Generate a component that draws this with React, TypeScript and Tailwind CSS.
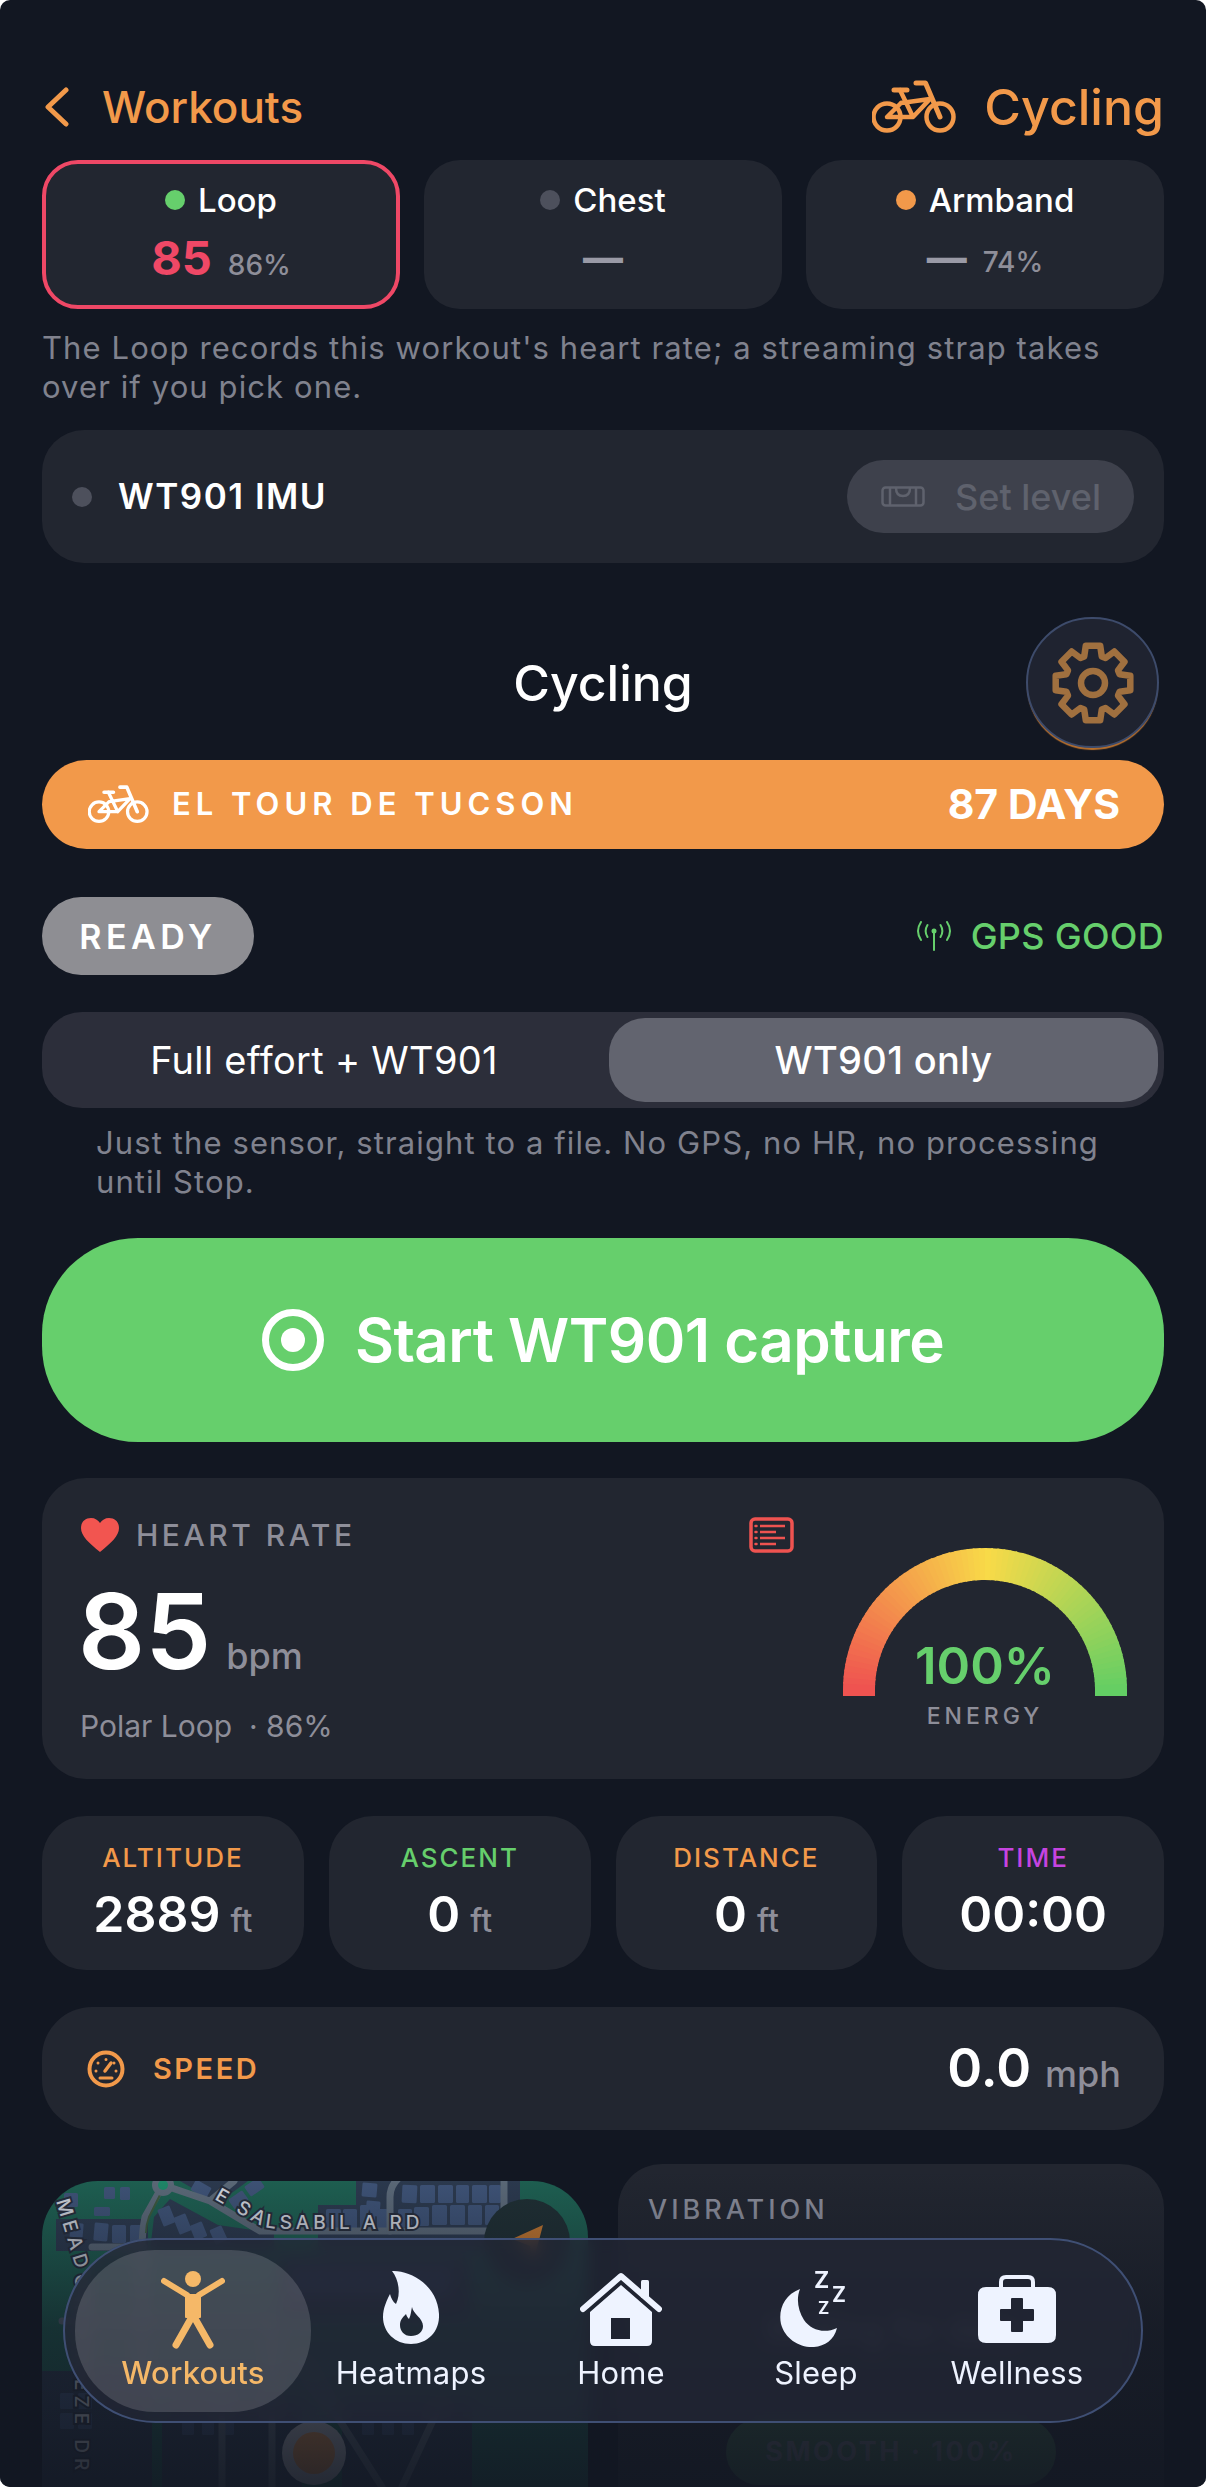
import React from 'react';

const cardClasses = "bg-[#222630] rounded-[44px]";
const statLabel = "text-[26px] leading-[30px] font-medium tracking-[2px]";
const noteClasses = "text-[31px] leading-[39px] tracking-[1.1px] text-[#80828e]";
const tabLabel = "text-[31px] leading-[36px] tracking-[0.2px]";
const font = { fontFamily: 'Inter, "Liberation Sans", sans-serif' };

function BikeIcon({ className }: { className?: string }) {
  return (
    <svg viewBox="0 0 84 54" className={className} fill="none" stroke="currentColor" strokeLinecap="round" strokeLinejoin="round">
      <circle cx="15" cy="37" r="13.500" strokeWidth="4.500" />
      <circle cx="68" cy="37" r="13.500" strokeWidth="4.500" />
      <path d="M22 10h13M44 3h9.500l14.500 34" strokeWidth="5" />
      <path d="M28 10l13 27M29 23l29-4-17 18H15l14-14" strokeWidth="4.500" />
    </svg>
  );
}

function gearPath(cx: number, cy: number) {
  const pts: string[] = [];
  for (let i = 0; i < 8; i++) {
    const a = (i * Math.PI) / 4 - Math.PI / 2;
    const at = (r: number, d: number) => `${(cx + r * Math.cos(a + d)).toFixed(1)} ${(cy + r * Math.sin(a + d)).toFixed(1)}`;
    pts.push(at(28, -0.32), at(38, -0.19), at(38, 0.19), at(28, 0.32));
  }
  return 'M' + pts.join('L') + 'Z';
}

function Gauge() {
  const segs = 72;
  const lerp = (a: number[], b: number[], t: number) => a.map((v, i) => Math.round(v + (b[i] - v) * t));
  const red = [239, 83, 80], yellow = [248, 218, 72], green = [98, 206, 100];
  return (
    <svg width="284" height="148" viewBox="0 0 284 148">
      <rect x="0" y="141" width="32" height="7" fill="rgb(239,83,80)" />
      <rect x="252" y="141" width="32" height="7" fill="rgb(98,206,100)" />
      {Array.from({ length: segs }).map((_, i) => {
        const t = i / segs;
        const a0 = Math.PI - t * Math.PI;
        const a1 = Math.PI - ((i + 1.3) / segs) * Math.PI;
        const c = t < 0.5 ? lerp(red, yellow, t * 2) : lerp(yellow, green, (t - 0.5) * 2);
        const r = 126;
        return (
          <path
            key={i}
            d={`M${142 + r * Math.cos(a0)} ${142 - r * Math.sin(a0)}A${r} ${r} 0 0 1 ${142 + r * Math.cos(Math.max(a1, 0))} ${142 - r * Math.sin(Math.max(a1, 0))}`}
            stroke={`rgb(${c.join(',')})`}
            strokeWidth="32"
            fill="none"
          />
        );
      })}
    </svg>
  );
}

function MapArt() {
  const blocks: [number, number, number, number, number][] = [
    // left block
    [28, 42, 13, 18, 5], [52, 42, 14, 18, 5], [70, 44, 14, 18, 0], [88, 44, 12, 17, 0], [22, 12, 14, 14, 0],
    [62, 6, 11, 12, 0], [78, 6, 10, 13, 0], [52, 26, 16, 9, 0],
    // centre
    [118, 26, 13, 18, -22], [134, 34, 13, 18, -22], [150, 42, 13, 16, -22], [170, 46, 13, 16, -25],
    [150, 2, 18, 12, 30], [188, 13, 17, 12, -35], [204, 0, 17, 12, -35],
    // right
    [320, 2, 15, 14, 5], [324, 20, 14, 15, 5], [284, 28, 15, 20, 0], [301, 28, 14, 20, 0], [318, 24, 15, 24, 0], [335, 28, 11, 20, 0],
    [360, 4, 15, 18, 3], [378, 4, 15, 18, 0], [396, 4, 15, 18, 0], [414, 4, 13, 18, 0], [430, 4, 15, 18, 0], [447, 4, 12, 18, 0],
    [356, 28, 14, 18, 0], [372, 26, 15, 19, 0], [390, 24, 15, 20, 0], [408, 24, 15, 20, 0], [426, 24, 14, 20, 0], [443, 24, 14, 20, 0],
    // under the nav
    [272, 88, 14, 28, 0], [292, 88, 14, 28, 0], [312, 88, 14, 28, 0], [332, 88, 14, 28, 0], [352, 88, 14, 28, 0], [372, 88, 14, 28, 0], [392, 88, 14, 28, 0], [252, 88, 14, 28, 0],
    // lower left
    [18, 212, 14, 16, 0], [36, 212, 14, 16, 0], [18, 232, 14, 16, 0], [36, 232, 14, 16, 0], [140, 240, 12, 14, 0], [160, 240, 12, 14, 0], [180, 240, 12, 14, 0],
    [320, 240, 12, 14, 0], [340, 240, 12, 14, 0], [360, 240, 12, 14, 0],
  ];
  return (
    <svg viewBox="0 0 546 306" width="546" height="306" className="block">
      <rect width="546" height="306" fill="#1e6152" />
      <g fill="#2c3a4f">
        <path d="M128 18L176 44 232 52V70H108L112 36ZM138 0H206L176 22Z" />
        <rect x="14" y="38" width="92" height="32" />
        <rect x="276" y="24" width="72" height="46" />
        <rect x="314" y="0" width="164" height="70" />
        <rect x="238" y="76" width="190" height="60" />
        <rect x="0" y="190" width="110" height="116" />
        <rect x="120" y="220" width="140" height="86" />
        <rect x="300" y="220" width="130" height="86" />
      </g>
      <g fill="#3f5478">
        {blocks.map(([x, y, w, h, r], i) => (
          <rect key={i} x={x} y={y} width={w} height={h} rx="1.500" transform={`rotate(${r} ${x + w / 2} ${y + h / 2})`} />
        ))}
      </g>
      <g fill="none" stroke="#5d6b7a" strokeWidth="7" strokeLinecap="round" strokeLinejoin="round">
        <path d="M121 4L103 36Q100 50 100 70V190M121 4L168 20 192 0M168 20L218 50H480M50 66H102" />
        <path d="M348 50V16Q348 4 358 -4M462 50V-4M20 140H230V306M180 200V306M260 180L340 306M400 220L360 306M100 200H180" />
      </g>
      <path d="M121 8L107 36Q104 44 104 52" stroke="#3c5a3e" strokeWidth="2" fill="none" />
      <circle cx="121" cy="4" r="11" fill="#5d6b7a" />
      <circle cx="121" cy="4" r="5" fill="#1f8a6a" />
      <circle cx="485" cy="61" r="43" fill="#1f2f33" />
      <path d="M501 44L470 58 488 65 491 82Z" fill="#c8792f" />
      <circle cx="272" cy="272" r="32" fill="#c4c6ce" />
      <circle cx="272" cy="272" r="21" fill="#f2994a" />
      <g fontFamily="Inter, sans-serif" fontSize="19" fontWeight="500" fill="#d5d9e0" stroke="#262d3b" strokeWidth="4" paintOrder="stroke" letterSpacing="4">
        <defs>
          <path id="salsabil" d="M172 18L214 42Q224 48 240 48H430" />
          <path id="meadow" d="M14 20L33 84V300" />
        </defs>
        <text><textPath href="#salsabil">E SALSABIL A RD</textPath></text>
        <text letterSpacing="5"><textPath href="#meadow">MEADOW BREEZE DR</textPath></text>
      </g>
    </svg>
  );
}

export default function App() {
  const stats = [
    { label: 'ALTITUDE', color: 'text-[#f2994a]', value: '2889', unit: 'ft' },
    { label: 'ASCENT', color: 'text-[#66cf6c]', value: '0', unit: 'ft' },
    { label: 'DISTANCE', color: 'text-[#f2994a]', value: '0', unit: 'ft' },
    { label: 'TIME', color: 'text-[#c644e0]', value: '00:00', unit: '' },
  ];

  return (
    <div className="w-[1206px] h-[2487px] bg-white overflow-hidden" style={font}>
      <div className="relative w-full h-full bg-[#121722] rounded-[10px] overflow-hidden px-[42px] pt-[76px] flex flex-col text-white">
        {/* header */}
        <div className="h-[62px] flex items-center justify-between shrink-0">
          <div className="flex items-center text-[#f2994a]">
            <svg width="26" height="40" viewBox="0 0 26 40" fill="none" stroke="currentColor" strokeWidth="5" strokeLinecap="round" strokeLinejoin="round" className="ml-[2px]">
              <path d="M22 3L4 20l18 17" />
            </svg>
            <span className="ml-[32px] text-[44px] leading-[50px] font-medium">Workouts</span>
          </div>
          <div className="flex items-center text-[#f2994a]">
            <BikeIcon className="w-[84px] h-[54px]" />
            <span className="ml-[28px] text-[50px] leading-[56px] font-medium">Cycling</span>
          </div>
        </div>

        {/* sensors */}
        <div className="mt-[22px] grid grid-cols-3 gap-[24px] h-[149px] shrink-0">
          <div className="bg-[#222630] rounded-[36px] border-[4px] border-[#ef4866] flex flex-col items-center pt-[18px]">
            <div className="flex items-center gap-[13px] h-[36px]">
              <span className="w-[20px] h-[20px] rounded-full bg-[#66cf6c]" />
              <span className="text-[33px] leading-[36px] font-medium">Loop</span>
            </div>
            <div className="flex items-baseline gap-[16px] mt-[12px]">
              <span className="text-[47px] leading-[56px] font-bold text-[#ef4866]">85</span>
              <span className="text-[28px] font-medium text-[#8e8e99]">86%</span>
            </div>
          </div>
          <div className="bg-[#222630] rounded-[36px] flex flex-col items-center pt-[22px]">
            <div className="flex items-center gap-[13px] h-[36px]">
              <span className="w-[20px] h-[20px] rounded-full bg-[#4d505c]" />
              <span className="text-[33px] leading-[36px] font-medium">Chest</span>
            </div>
            <span className="mt-[12px] text-[40px] leading-[56px] font-extrabold text-[#9a9aa6]">—</span>
          </div>
          <div className="bg-[#222630] rounded-[36px] flex flex-col items-center pt-[22px]">
            <div className="flex items-center gap-[13px] h-[36px]">
              <span className="w-[20px] h-[20px] rounded-full bg-[#f2994a]" />
              <span className="text-[33px] leading-[36px] font-medium">Armband</span>
            </div>
            <div className="mt-[12px] flex items-baseline gap-[16px]">
              <span className="text-[40px] leading-[56px] font-extrabold text-[#9a9aa6]">—</span>
              <span className="text-[28px] font-medium text-[#8e8e99]">74%</span>
            </div>
          </div>
        </div>

        <p className={`mt-[19px] ${noteClasses}`}>
          The Loop records this workout's heart rate; a streaming strap takes over if you pick one.
        </p>

        {/* imu */}
        <div className="mt-[24px] h-[133px] shrink-0 rounded-[42px] bg-[#222630] flex items-center pl-[30px] pr-[30px]">
          <span className="w-[20px] h-[20px] rounded-full bg-[#4d505c]" />
          <span className="ml-[26px] text-[35px] font-semibold tracking-[1.5px]">WT901 IMU</span>
          <div className="ml-auto w-[287px] h-[73px] rounded-full bg-[#3e414c] flex items-center pl-[34px] text-[#5f626d]">
            <svg width="44" height="21" viewBox="0 0 44 21" fill="none" stroke="currentColor" strokeWidth="2.500">
              <rect x="1.500" y="1.500" width="41" height="18" rx="3" />
              <path d="M9 2v17M35 2v17" />
              <path d="M15 2c0 6 3 8 7 8s7-2 7-8" />
            </svg>
            <span className="ml-[30px] text-[36px] font-medium">Set level</span>
          </div>
        </div>

        {/* title */}
        <div className="relative mt-[54px] h-[131px] shrink-0 flex items-center justify-center">
          <span className="text-[50px] leading-[56px] font-medium">Cycling</span>
          <div className="absolute right-[5px] top-0 w-[133px] h-[131px] rounded-full bg-[#1f2330] border-[2px] border-[#3d4b6b] shadow-[0_3px_1px_-1px_#b9702c] flex items-center justify-center">
            <svg width="90" height="90" viewBox="0 0 90 90" fill="none" stroke="#a0703f" strokeWidth="6.500" strokeLinejoin="round">
              <path d={gearPath(45, 45)} />
              <circle cx="45" cy="45" r="12" />
            </svg>
          </div>
        </div>

        {/* event bar */}
        <div className="mt-[12px] h-[89px] shrink-0 rounded-full bg-[#f2994a] flex items-center pl-[46px] pr-[44px]">
          <BikeIcon className="w-[61px] h-[39px]" />
          <span className="ml-[23px] text-[31px] font-semibold tracking-[5px]">EL TOUR DE TUCSON</span>
          <span className="ml-auto text-[41px] font-bold">87 DAYS</span>
        </div>

        {/* status */}
        <div className="mt-[48px] h-[78px] shrink-0 flex items-center justify-between">
          <div className="h-full w-[212px] rounded-full bg-[#8e8e93] flex items-center justify-center text-[34px] font-semibold tracking-[4.5px]">READY</div>
          <div className="flex items-center text-[#66cf6c] text-[36px] font-medium tracking-[0.3px]">
            <svg width="36" height="30" viewBox="0 0 36 30" fill="none" stroke="currentColor" strokeWidth="2" strokeLinecap="round">
              <path d="M18 10v19" />
              <circle cx="18" cy="10" r="2.500" fill="currentColor" stroke="none" />
              <path d="M11.500 4c-2.500 4-2.500 8 0 12M24.500 4c2.500 4 2.500 8 0 12M5 1c-4 6-4 12 0 18M31 1c4 6 4 12 0 18" />
            </svg>
            <span className="ml-[19px]">GPS GOOD</span>
          </div>
        </div>

        {/* mode switch */}
        <div className="mt-[37px] h-[96px] shrink-0 rounded-[40px] bg-[#2c2e3a] p-[6px] flex">
          <div className="w-[561px] pr-[9px] flex items-center justify-center text-[38px] tracking-[0.3px]">Full effort + WT901</div>
          <div className="flex-1 rounded-[36px] bg-[#62646f] flex items-center justify-center text-[38px] font-medium tracking-[0.3px]">WT901 only</div>
        </div>

        <p className={`mt-[15px] pl-[54px] pr-[30px] ${noteClasses}`}>
          Just the sensor, straight to a file. No GPS, no HR, no processing until Stop.
        </p>

        {/* start */}
        <div className="mt-[37px] h-[204px] shrink-0 rounded-[96px] bg-[#66cf6c] flex items-center justify-center">
          <svg width="62" height="62" viewBox="0 0 62 62">
            <circle cx="31" cy="31" r="27.500" fill="none" stroke="white" strokeWidth="7" />
            <circle cx="31" cy="31" r="12" fill="white" />
          </svg>
          <span className="ml-[31px] text-[60px] font-semibold tracking-[-0.5px]">Start WT901 capture</span>
        </div>

        {/* heart rate */}
        <div className={`${cardClasses} mt-[36px] h-[301px] shrink-0 flex pl-[38px] pr-[37px]`}>
          <div className="flex-1 pr-[49px] flex flex-col">
            <div className="mt-[39px] h-[36px] flex items-center justify-between">
              <div className="flex items-center">
                <svg width="38" height="34" viewBox="0 0 38 34" fill="#f25550" className="ml-[1px]">
                  <path d="M19 34C8 25 0 18 0 10 0 4 4 0 10 0c4 0 7 2 9 5 2-3 5-5 9-5 6 0 10 4 10 10 0 8-8 15-19 24Z" />
                </svg>
                <span className="ml-[17px] text-[30px] font-medium tracking-[3.5px] text-[#8e8e99]">HEART RATE</span>
              </div>
              <svg width="45" height="36" viewBox="0 0 45 36" fill="none" stroke="#ef5350">
                <rect x="2" y="2" width="41" height="32" rx="4" strokeWidth="3.500" />
                <path d="M11 9h25M11 15h16M11 21h25M11 27h16" strokeWidth="2.500" />
                <path d="M6.500 9h1M6.500 15h1M6.500 21h1M6.500 27h1" strokeWidth="2.500" strokeLinecap="round" />
              </svg>
            </div>
            <div className="mt-[22px] flex items-baseline">
              <span className="text-[105px] leading-[112px] font-semibold -ml-[2px]">85</span>
              <span className="ml-[15px] text-[36px] font-medium text-[#8e8e99]">bpm</span>
            </div>
            <div className="mt-[21px] text-[30px] leading-[36px] text-[#8e8e99]">Polar Loop&nbsp; · 86%</div>
          </div>
          <div className="w-[284px] pt-[70px] flex flex-col items-center">
            <Gauge />
            <span className="-mt-[58px] text-[51px] leading-[56px] font-semibold text-[#66cf6c]">100%</span>
            <span className="mt-[8px] text-[23px] leading-[28px] font-medium tracking-[4px] text-[#8e8e99]">ENERGY</span>
          </div>
        </div>

        {/* stats */}
        <div className="mt-[37px] h-[154px] shrink-0 grid grid-cols-4 gap-[25px]">
          {stats.map(s => (
            <div key={s.label} className={`${cardClasses} flex flex-col items-center pt-[27px]`}>
              <span className={`${statLabel} ${s.color}`}>{s.label}</span>
              <div className="mt-[10px] flex items-baseline">
                <span className="text-[50px] leading-[62px] font-semibold">{s.value}</span>
                {s.unit && <span className="ml-[10px] text-[32px] font-medium text-[#8e8e99]">{s.unit}</span>}
              </div>
            </div>
          ))}
        </div>

        {/* speed */}
        <div className={`${cardClasses} mt-[37px] h-[123px] shrink-0 rounded-[50px] flex items-center pl-[45px] pr-[43px]`}>
          <svg width="38" height="38" viewBox="0 0 38 38" fill="none" stroke="#f2994a" strokeLinecap="round">
            <circle cx="19" cy="19" r="16.500" strokeWidth="4" />
            <path d="M19 9.500v.1M11 13v.1M27 13v.1M9 21v.1M29 21v.1M13 28h12" strokeWidth="3" />
            <path d="M18 21l6-8" strokeWidth="3.500" />
          </svg>
          <span className="ml-[28px] text-[29px] font-semibold tracking-[2.5px] text-[#f2994a]">SPEED</span>
          <div className="ml-auto flex items-baseline">
            <span className="text-[53px] font-semibold">0.0</span>
            <span className="ml-[14px] text-[36px] font-medium text-[#8e8e99]">mph</span>
          </div>
        </div>

        {/* map + vibration */}
        <div className="mt-[34px] grid grid-cols-2 gap-[30px] shrink-0">
          <div className="mt-[17px] h-[306px] rounded-t-[56px] overflow-hidden">
            <MapArt />
          </div>
          <div className={`${cardClasses} h-[323px] rounded-b-none flex flex-col items-center pt-[30px]`}>
            <span className="self-start ml-[30px] text-[27px] leading-[32px] font-medium tracking-[4px] text-[#8e919e]">VIBRATION</span>
            <span className="mt-[78px] text-[34px] text-[#8e919e]">Waiting for data</span>
            <div className="mt-[64px] w-[330px] h-[66px] rounded-full bg-[#66cf6c]/35 flex items-center justify-center text-[27px] font-bold tracking-[2.5px] text-[#6a6d78]">SMOOTH · 100%</div>
          </div>
        </div>

        {/* fade under the tab bar */}
        <div className="absolute inset-x-0 bottom-0 h-[317px] pointer-events-none bg-gradient-to-b from-[#121722]/0 via-[#121722]/65 to-[#121722]/90" />

        {/* tab bar */}
        <div className="absolute left-[63px] right-[63px] bottom-[64px] h-[185px] rounded-full border-[2px] border-[#3f4f74] bg-[#232735]/75 backdrop-blur-[8px] flex items-center pl-[10px]">
          <div className="w-[236px] h-[162px] rounded-[80px] bg-white/15 flex flex-col items-center justify-center">
            <div className="h-[85px] flex items-end pb-[6px]">
              <svg width="64" height="78" viewBox="0 0 64 78" fill="#f5b868" stroke="#f5b868" strokeLinecap="round" strokeLinejoin="round">
                <circle cx="32" cy="8" r="8" stroke="none" />
                <path d="M3 10L26 24M61 10L38 24" strokeWidth="6" />
                <path d="M25 24H39V46H25Z" strokeWidth="2" />
                <path d="M32 44L15 74M32 44L49 74" strokeWidth="7" />
              </svg>
            </div>
            <span className={`${tabLabel} font-medium text-[#f5b868]`}>Workouts</span>
          </div>
          <div className="w-[200px] flex flex-col items-center text-[#eef3ff]">
            <div className="h-[85px] flex items-end pb-[11px]">
              <svg width="57" height="74" viewBox="0 0 57 74" fill="currentColor">
                <path fillRule="evenodd" d="M9 1C28 0 55 16 56 44 57 62 44 74 28 74 12 74 0 62 0 47 0 38 4 30 7 24 8 28 10 32 13 34 18 24 16 10 9 1ZM29 37C30 44 40 48 40 56 40 62 35 66 28 66 21 66 17 61 17 55 17 50 20 47 23 44 24 47 25 48 26 49 28 45 28 41 29 37Z" />
              </svg>
            </div>
            <span className={tabLabel}>Heatmaps</span>
          </div>
          <div className="w-[220px] flex flex-col items-center text-[#eef3ff]">
            <div className="h-[85px] flex items-end pb-[9px]">
              <svg width="82" height="74" viewBox="0 0 82 74" fill="currentColor">
                <path d="M3 37L41 4 79 37" fill="none" stroke="currentColor" strokeWidth="6" strokeLinecap="round" strokeLinejoin="round" />
                <rect x="61" y="8" width="8" height="18" rx="1.500" />
                <path fillRule="evenodd" d="M41 13L72 40V69Q72 74 67 74H15Q10 74 10 69V40ZM31 46V67H50V46Z" />
              </svg>
            </div>
            <span className={tabLabel}>Home</span>
          </div>
          <div className="w-[170px] flex flex-col items-center text-[#eef3ff]">
            <div className="h-[85px] flex items-end pb-[7px]">
              <svg width="72" height="80" viewBox="0 0 72 80" fill="currentColor">
                <path d="M20 21C4 27-2 42 1 56 5 71 20 80 34 79 45 78 54 72 57 60 44 66 31 62 24 52 18 42 16 31 20 21Z" />
                <text x="34" y="20" fontSize="23" fontWeight="700" fontFamily="Inter, sans-serif">Z</text>
                <text x="52" y="34" fontSize="21" fontWeight="700" fontFamily="Inter, sans-serif">Z</text>
                <text x="38" y="46" fontSize="17" fontWeight="700" fontFamily="Inter, sans-serif">Z</text>
              </svg>
            </div>
            <span className={tabLabel}>Sleep</span>
          </div>
          <div className="w-[232px] flex flex-col items-center text-[#eef3ff]">
            <div className="h-[85px] flex items-end pb-[12px]">
              <svg width="80" height="68" viewBox="0 0 80 68" fill="currentColor">
                <path d="M24 13V7Q24 2 29 2H51Q56 2 56 7V13" fill="none" stroke="currentColor" strokeWidth="4" />
                <path fillRule="evenodd" d="M9 12H71Q79 12 79 20V60Q79 68 71 68H9Q1 68 1 60V20Q1 12 9 12ZM34 24Q34 23 35 23H45Q46 23 46 24V34H56Q57 34 57 35V45Q57 46 56 46H46V56Q46 57 45 57H35Q34 57 34 56V46H24Q23 46 23 45V35Q23 34 24 34H34Z" />
              </svg>
            </div>
            <span className={tabLabel}>Wellness</span>
          </div>
        </div>
      </div>
    </div>
  );
}
